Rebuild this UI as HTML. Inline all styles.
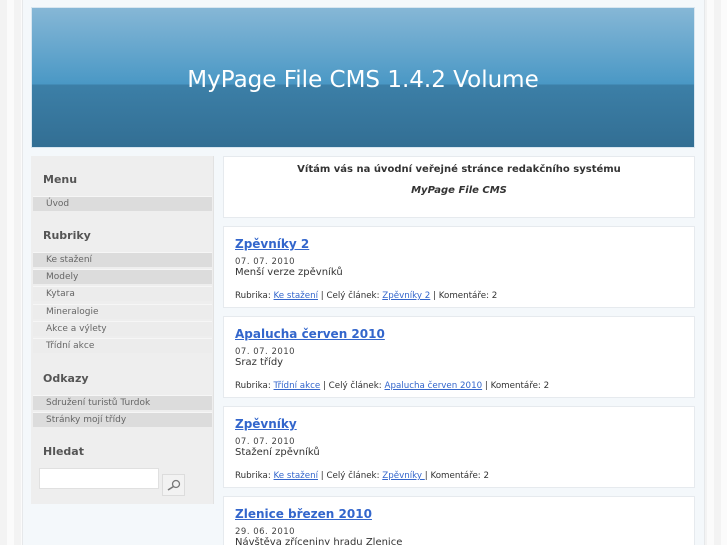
<!DOCTYPE html>
<html style="width:727px;height:545px;overflow:hidden"><head><meta charset="utf-8"><style>
*{margin:0;padding:0;box-sizing:border-box}
body{width:727px;height:545px;overflow:hidden;background:#f0f0f0;font-family:"DejaVu Sans","Liberation Sans",sans-serif;position:relative}
.bg{position:absolute;left:0;top:0;width:727px;height:545px;background:repeating-linear-gradient(90deg,#f3f3f3 0 7px,#fbfbfb 7px 14px)}
.wrap{position:absolute;left:22px;top:0;width:683px;height:545px;background:#f4f8fb;border-left:1px solid #e6e8ea;border-right:1px solid #e6e8ea}
.head{position:absolute;left:31px;top:7px;width:664px;height:141px;background:linear-gradient(#86b7d6 0,#4a98c5 76px,#3c7fa7 77px,#326e93 141px);border:1px solid #d8e6f0}
.head h1{font-weight:normal;color:#fff;font-size:23px;text-align:center;margin-top:59px;letter-spacing:0}
.side{position:absolute;left:31px;top:156px;width:183px;height:348px;background:#eeeeee;border-right:1px solid #e2e2e2}
.side h3{font-size:11px;color:#555;font-weight:bold;padding-left:12px;position:absolute;left:0}
.side .it{position:absolute;left:2px;width:179px;height:15px;font-size:9px;color:#666;padding-left:13px;line-height:15px;background:#ececec;border-top:1px solid #f6f6f6}
.side .it.d{background:#dcdcdc}
.main{position:absolute;left:223px;width:472px;background:#fff;border:1px solid #e6eaee;overflow:hidden}
.p a.t{font-size:12px;color:#3366cc;font-weight:bold;text-decoration:underline;position:absolute;left:11px;top:10px}
.p .dt{position:absolute;left:11px;top:30px;font-size:8.5px;color:#444;letter-spacing:.5px}
.p .tx{position:absolute;left:11px;top:40px;font-size:10px;color:#333}
.p .ft{position:absolute;left:11px;top:64px;font-size:8.7px;color:#333}
.p .ft a{color:#3366cc;text-decoration:underline}
</style></head><body>
<div class="bg"></div>
<div class="wrap"></div>
<div class="head"><h1>MyPage File CMS 1.4.2 Volume</h1></div>
<div class="side">
<h3 style="top:17px">Menu</h3>
<div class="it d" style="top:40px">Úvod</div>
<h3 style="top:73px">Rubriky</h3>
<div class="it d" style="top:96px">Ke stažení</div>
<div class="it d" style="top:113px">Modely</div>
<div class="it" style="top:130px">Kytara</div>
<div class="it" style="top:148px">Mineralogie</div>
<div class="it" style="top:165px">Akce a výlety</div>
<div class="it" style="top:182px">Třídní akce</div>
<h3 style="top:216px">Odkazy</h3>
<div class="it d" style="top:239px">Sdružení turistů Turdok</div>
<div class="it d" style="top:256px">Stránky mojí třídy</div>
<h3 style="top:289px">Hledat</h3>
<div style="position:absolute;left:8px;top:312px;width:120px;height:21px;background:#fff;border:1px solid #e0e0e0"></div>
<div style="position:absolute;left:131px;top:318px;width:23px;height:22px;background:#f2f2f2;border:1px solid #dcdcdc"><svg width="21" height="20"><circle cx="13" cy="9" r="3.5" fill="none" stroke="#777" stroke-width="1.3"/><line x1="10.5" y1="11.5" x2="5" y2="15" stroke="#777" stroke-width="1.6"/></svg></div>
</div>
<div class="main" style="top:156px;height:62px">
<div style="text-align:center;font-size:10px;font-weight:bold;color:#333;margin-top:7px">Vítám vás na úvodní veřejné stránce redakčního systému</div>
<div style="text-align:center;font-size:10px;font-weight:bold;font-style:italic;color:#333;margin-top:10px">MyPage File CMS</div>
</div>
<div class="main p" style="top:226px;height:82px"><a class="t">Zpěvníky 2</a><div class="dt">07. 07. 2010</div><div class="tx">Menší verze zpěvníků</div><div class="ft">Rubrika: <a>Ke stažení</a> | Celý článek: <a>Zpěvníky 2</a> | Komentáře: 2</div></div>
<div class="main p" style="top:316px;height:82px"><a class="t">Apalucha červen 2010</a><div class="dt">07. 07. 2010</div><div class="tx">Sraz třídy</div><div class="ft">Rubrika: <a>Třídní akce</a> | Celý článek: <a>Apalucha červen 2010</a> | Komentáře: 2</div></div>
<div class="main p" style="top:406px;height:82px"><a class="t">Zpěvníky </a><div class="dt">07. 07. 2010</div><div class="tx">Stažení zpěvníků</div><div class="ft">Rubrika: <a>Ke stažení</a> | Celý článek: <a>Zpěvníky </a> | Komentáře: 2</div></div>
<div class="main p" style="top:496px;height:49px;border-bottom:none"><a class="t">Zlenice březen 2010</a><div class="dt">29. 06. 2010</div><div class="tx">Návštěva zříceniny hradu Zlenice</div></div>
</body></html>
